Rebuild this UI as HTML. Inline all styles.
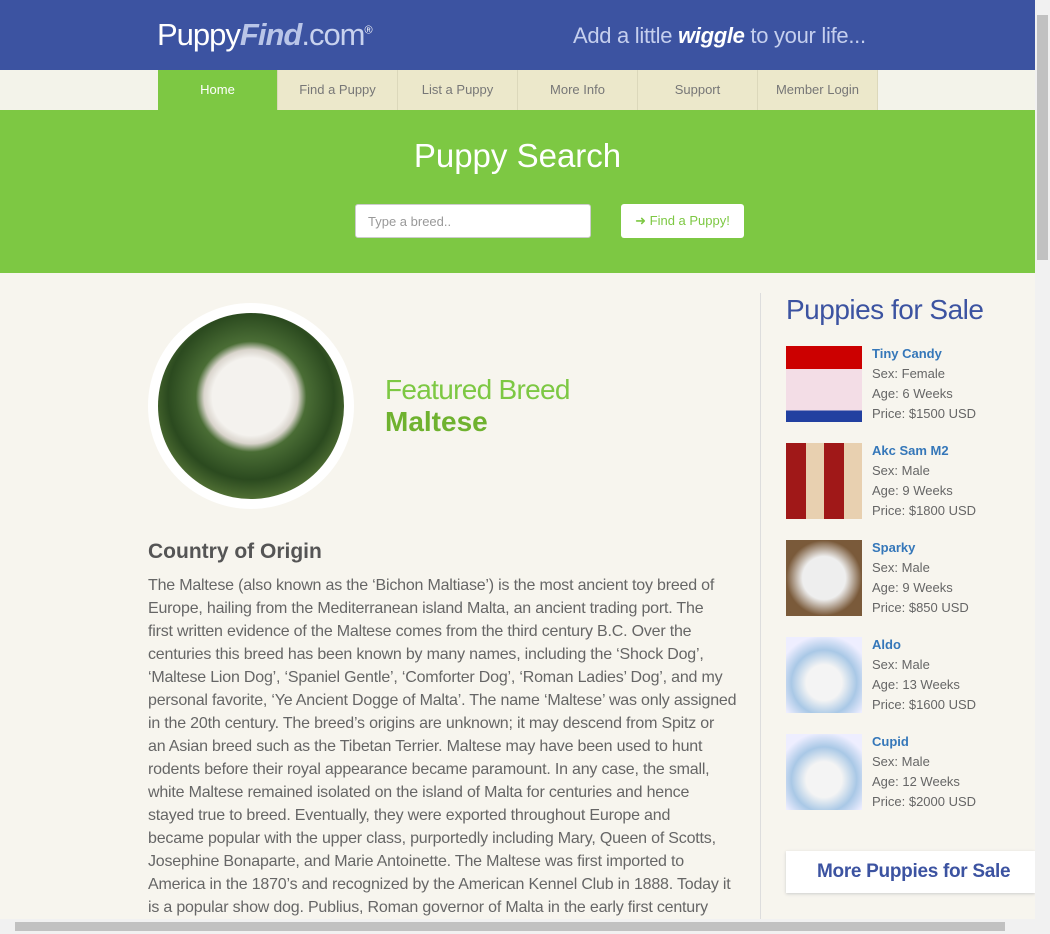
<!DOCTYPE html>
<html><head><meta charset="utf-8"><style>
*{margin:0;padding:0;box-sizing:border-box}
body{width:1050px;height:934px;overflow:hidden;background:#f7f5ee;font-family:"Liberation Sans",sans-serif;position:relative}
.hdr{position:absolute;left:0;top:0;width:1035px;height:70px;background:#3c53a1}
.logo{position:absolute;left:157px;top:17px;color:#fff;font-size:31px;letter-spacing:-1px}
.logo b{color:#b9c5e8;font-style:italic}
.logo span{color:#c8d2ee}
.tag{position:absolute;left:573px;top:23px;color:#c5cfee;font-size:22px;letter-spacing:-0.3px}
.tag b{color:#fff;font-style:italic}
.nav{position:absolute;left:0;top:70px;width:1035px;height:40px;background:#f3f3ea}
.nav div{position:absolute;top:0;width:120px;height:40px;background:#ece8cb;border-right:1px solid #dcd8bb;color:#777;font-size:13px;text-align:center;line-height:40px}
.nav .h{background:#7dc843;color:#fff}
.hero{position:absolute;left:0;top:110px;width:1035px;height:163px;background:#7dc843}
.hero h1{position:absolute;left:0;width:1035px;top:27px;text-align:center;font-weight:normal;color:#fff;font-size:33px}
.inp{position:absolute;left:355px;top:94px;width:236px;height:34px;background:#fff;border:1px solid #ccc;border-radius:3px;color:#999;font-size:13px;padding:9px 12px}
.btn{position:absolute;left:621px;top:94px;width:123px;height:34px;background:#fff;border-radius:3px;color:#7dc843;font-size:13px;line-height:34px;text-align:center}
.circ{position:absolute;left:148px;top:303px;width:206px;height:206px;border-radius:50%;background:#fff}
.circ div{position:absolute;left:10px;top:10px;width:186px;height:186px;border-radius:50%;background:radial-gradient(circle at 50% 45%,#f4f2ee 0 28%,#d9d4cc 34%,#4a6d35 40%,#2b4a1f 60%,#5f7f3c 80%)}
.fb{position:absolute;left:385px;top:374px;color:#7dc843;font-size:28px;letter-spacing:-0.7px}
.mt{position:absolute;left:385px;top:406px;color:#6fb22f;font-size:28px;font-weight:bold}
h2{position:absolute;left:148px;top:540px;font-size:21px;color:#555}
.txt{position:absolute;left:148px;top:574px;font-size:16px;line-height:23px;color:#666;letter-spacing:-0.2px;white-space:nowrap}
.vl{position:absolute;left:760px;top:293px;width:1px;height:630px;background:#ddd}
.ps{position:absolute;left:786px;top:294px;font-size:28px;color:#3c53a1;letter-spacing:-0.5px}
.it{position:absolute;left:786px;width:240px;height:78px}
.it .im{position:absolute;left:0;top:0;width:76px;height:76px}
.it .t{position:absolute;left:86px;top:-2px;font-size:13px;line-height:20px;color:#666}
.it b{color:#3577b9}
.more{position:absolute;left:786px;top:851px;width:249px;height:42px;background:#fff;box-shadow:0 1px 3px #ccc;color:#3c53a1;font-size:19px;font-weight:bold;padding:10px 0 0 31px;letter-spacing:-0.3px}
.vs{position:absolute;left:1035px;top:0;width:15px;height:934px;background:#f1f1f1}
.vs div{position:absolute;left:2px;top:15px;width:11px;height:245px;background:#c1c1c1}
.hs{position:absolute;left:0;top:919px;width:1035px;height:15px;background:#f1f1f1}
.hs div{position:absolute;left:15px;top:3px;width:990px;height:9px;background:#c1c1c1}
</style></head><body>
<div class="hdr"><div class="logo">Puppy<b>Find</b><span>.com</span><sup style="font-size:11px">®</sup></div>
<div class="tag">Add a little <b>wiggle</b> to your life...</div></div>
<div class="nav"><div class="h" style="left:158px">Home</div><div style="left:278px">Find a Puppy</div><div style="left:398px">List a Puppy</div><div style="left:518px">More Info</div><div style="left:638px">Support</div><div style="left:758px">Member Login</div></div>
<div class="hero"><h1>Puppy Search</h1><div class="inp">Type a breed..</div><div class="btn">➜ Find a Puppy!</div></div>
<div class="circ"><div></div></div>
<div class="fb">Featured Breed</div><div class="mt">Maltese</div>
<h2>Country of Origin</h2>
<div class="txt">The Maltese (also known as the ‘Bichon Maltiase’) is the most ancient toy breed of<br>Europe, hailing from the Mediterranean island Malta, an ancient trading port. The<br>first written evidence of the Maltese comes from the third century B.C. Over the<br>centuries this breed has been known by many names, including the ‘Shock Dog’,<br>‘Maltese Lion Dog’, ‘Spaniel Gentle’, ‘Comforter Dog’, ‘Roman Ladies’ Dog’, and my<br>personal favorite, ‘Ye Ancient Dogge of Malta’. The name ‘Maltese’ was only assigned<br>in the 20th century. The breed’s origins are unknown; it may descend from Spitz or<br>an Asian breed such as the Tibetan Terrier. Maltese may have been used to hunt<br>rodents before their royal appearance became paramount. In any case, the small,<br>white Maltese remained isolated on the island of Malta for centuries and hence<br>stayed true to breed. Eventually, they were exported throughout Europe and<br>became popular with the upper class, purportedly including Mary, Queen of Scotts,<br>Josephine Bonaparte, and Marie Antoinette. The Maltese was first imported to<br>America in the 1870’s and recognized by the American Kennel Club in 1888. Today it<br>is a popular show dog. Publius, Roman governor of Malta in the early first century</div>
<div class="vl"></div>
<div class="ps">Puppies for Sale</div>
<div class="it" style="top:346px"><div class="im" style="background:linear-gradient(#c00 0 30%,#f3dde6 30% 85%,#2240a0 85%)"></div><div class="t"><b>Tiny Candy</b><br>Sex: Female<br>Age: 6 Weeks<br>Price: $1500 USD</div></div>
<div class="it" style="top:443px"><div class="im" style="background:repeating-linear-gradient(90deg,#a01818 0 20px,#e8d0b0 20px 38px)"></div><div class="t"><b>Akc Sam M2</b><br>Sex: Male<br>Age: 9 Weeks<br>Price: $1800 USD</div></div>
<div class="it" style="top:540px"><div class="im" style="background:radial-gradient(circle,#eee 0 40%,#7a5a3a 70%)"></div><div class="t"><b>Sparky</b><br>Sex: Male<br>Age: 9 Weeks<br>Price: $850 USD</div></div>
<div class="it" style="top:637px"><div class="im" style="background:radial-gradient(circle at 50% 60%,#f4f4f4 0 30%,#a9c8e6 55%,#eef 80%)"></div><div class="t"><b>Aldo</b><br>Sex: Male<br>Age: 13 Weeks<br>Price: $1600 USD</div></div>
<div class="it" style="top:734px"><div class="im" style="background:radial-gradient(circle at 50% 60%,#f4f4f4 0 30%,#a9c8e6 55%,#eef 80%)"></div><div class="t"><b>Cupid</b><br>Sex: Male<br>Age: 12 Weeks<br>Price: $2000 USD</div></div>
<div class="more">More Puppies for Sale</div>
<div class="vs"><div></div></div><div class="hs"><div></div></div>
</body></html>
